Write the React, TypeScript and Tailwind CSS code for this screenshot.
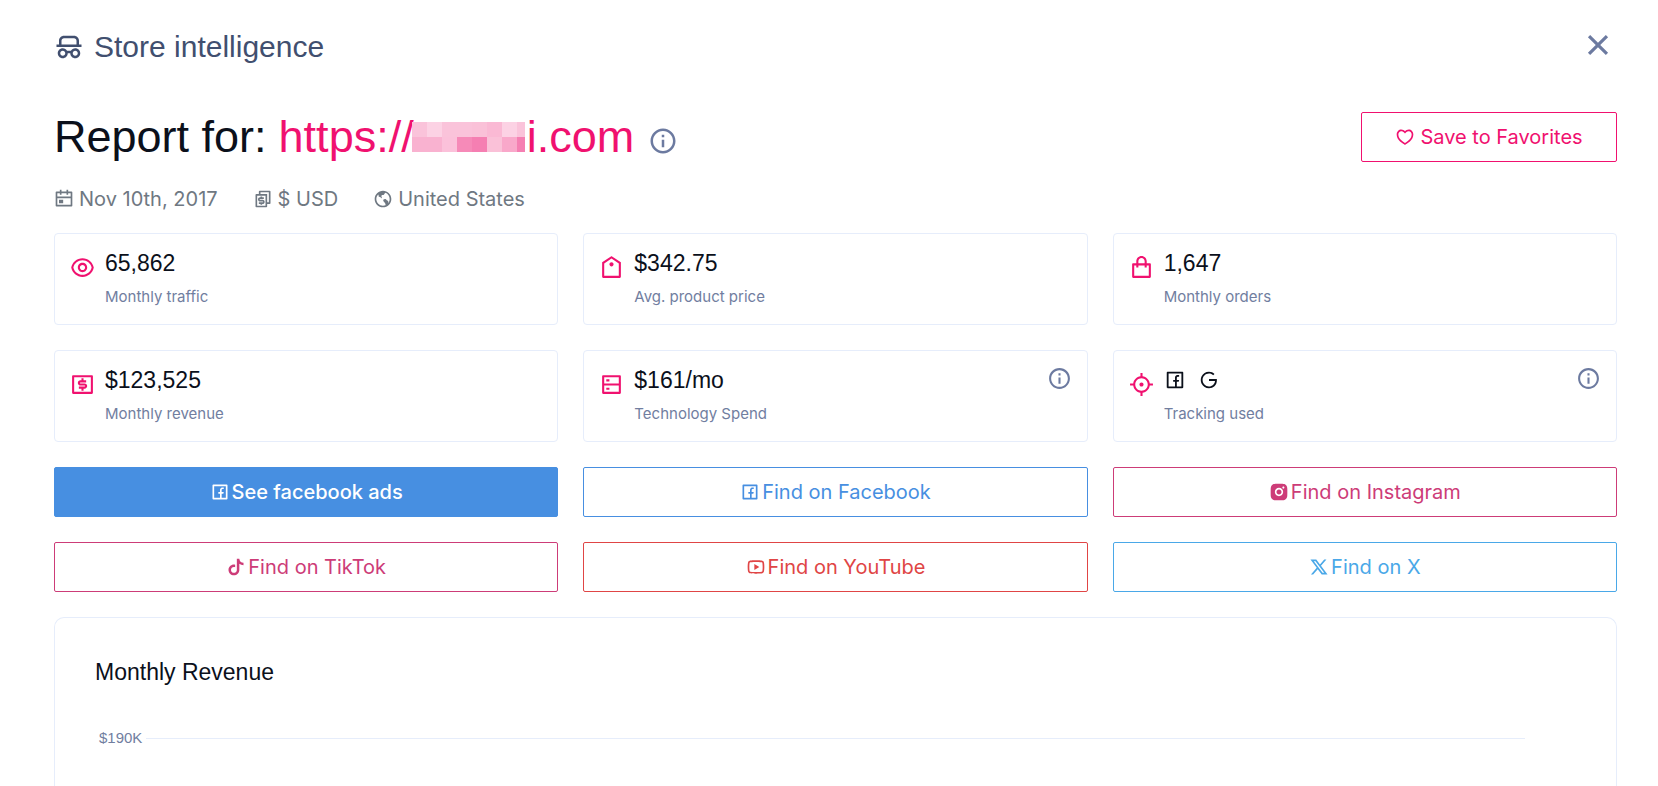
import React from 'react';
import {
  RiCalendarEventLine,
  RiCloseLine,
  RiCurrencyLine,
  RiEarthLine,
  RiEyeLine,
  RiFacebookBoxLine,
  RiFocus3Line,
  RiGoogleLine,
  RiHeart3Line,
  RiInformationLine,
  RiInstagramFill,
  RiMoneyDollarBoxLine,
  RiPriceTagLine,
  RiServerLine,
  RiShoppingBagLine,
  RiSpyLine,
  RiTiktokFill,
  RiTwitterXLine,
  RiYoutubeLine,
} from 'react-icons/ri';
import type { IconType } from 'react-icons';

interface StatCardProps {
  icon: IconType;
  value: React.ReactNode;
  label: string;
  hasInfo?: boolean;
}

const StatCard: React.FC<StatCardProps> = ({ icon: Icon, value, label, hasInfo }) => (
  <div className="flex items-start gap-2.5 h-[92px] rounded border border-[#e6edfb] px-[15px] pt-[15px]">
    <Icon className="text-[#f0116f] mt-1.5 flex-shrink-0" size={25} />
    <div className="flex-1">
      <div className="flex items-center h-7 text-[23px] leading-7 text-[#0b101b]">{value}</div>
      <div className="mt-2.5 font-['Inter',sans-serif] text-[15px] leading-5 text-[#717e9f]">{label}</div>
    </div>
    {hasInfo && (
      <button type="button" aria-label={`About ${label}`} className="text-[#6c7aa0]">
        <RiInformationLine size={25} />
      </button>
    )}
  </div>
);

const stats: StatCardProps[] = [
  { icon: RiEyeLine, value: '65,862', label: 'Monthly traffic' },
  { icon: RiPriceTagLine, value: '$342.75', label: 'Avg. product price' },
  { icon: RiShoppingBagLine, value: '1,647', label: 'Monthly orders' },
  { icon: RiMoneyDollarBoxLine, value: '$123,525', label: 'Monthly revenue' },
  { icon: RiServerLine, value: '$161/mo', label: 'Technology Spend', hasInfo: true },
  {
    icon: RiFocus3Line,
    value: (
      <span className="flex gap-3">
        <RiFacebookBoxLine size={22} />
        <RiGoogleLine size={22} />
      </span>
    ),
    label: 'Tracking used',
    hasInfo: true,
  },
];

const links = [
  { icon: RiFacebookBoxLine, text: 'See facebook ads', style: 'bg-[#478fe1] border-[#478fe1] text-white font-medium' },
  { icon: RiFacebookBoxLine, text: 'Find on Facebook', style: 'border-[#478fe1] text-[#478fe1]' },
  { icon: RiInstagramFill, text: 'Find on Instagram', style: 'border-[#cd3c78] text-[#cd3c78]' },
  { icon: RiTiktokFill, text: 'Find on TikTok', style: 'border-[#cd3c78] text-[#cd3c78]' },
  { icon: RiYoutubeLine, text: 'Find on YouTube', style: 'border-[#e04545] text-[#e04545]' },
  { icon: RiTwitterXLine, text: 'Find on X', style: 'border-[#4aa8e8] text-[#4aa8e8]' },
];

const meta = [
  { icon: RiCalendarEventLine, text: 'Nov 10th, 2017' },
  { icon: RiCurrencyLine, text: '$ USD' },
  { icon: RiEarthLine, text: 'United States' },
];

// The middle of the domain is masked with two rows of tiles
const maskTiles = [
  'bg-[#fac3da]', 'bg-[#fcd2e4]', 'bg-[#fac3da]', 'bg-[#fac3da]', 'bg-[#fac1d8]', 'bg-[#fab9d4]', 'bg-[#fcd2e4]', 'bg-[#fac3da]',
  'bg-[#f9b2d0]', 'bg-[#f9b2d0]', 'bg-[#fbc1da]', 'bg-[#f68ab8]', 'bg-[#f57fb2]', 'bg-[#fac1d8]', 'bg-[#f9a8ca]', 'bg-[#f57fb2]',
];

const App: React.FC = () => {
  return (
    <div className="min-h-screen flex flex-col bg-white pl-[54px] pr-[41px] pt-7 font-['Liberation_Sans',Arial,sans-serif]">
      <header className="flex items-start justify-between h-9">
        <div className="flex items-center gap-2.5 text-[#414f6f]">
          <RiSpyLine size={30} />
          <span className="text-[30px] leading-[38px]">Store intelligence</span>
        </div>
        <button type="button" aria-label="Close" className="text-[#6c7aa0] -mt-0.5">
          <RiCloseLine size={38} />
        </button>
      </header>

      <div className="flex items-center justify-between h-[50px] mt-12">
        <div className="flex items-center">
          <h1 className="flex items-center text-[45px] leading-[50px] text-[#0b101b]">
            <span className="mr-3">Report for:</span>
            <a href="#store" className="flex items-center text-[#f0116f]">
              https://
              <span className="grid grid-cols-[repeat(7,15px)_8px] -ml-0.5 mr-0.5">
                {maskTiles.map((tile, i) => (
                  <span key={i} className={`h-[15px] ${tile}`} />
                ))}
              </span>
              i.com
            </a>
          </h1>
          <button type="button" aria-label="About this report" className="text-[#6c7aa0] ml-3.5 mt-2">
            <RiInformationLine size={30} />
          </button>
        </div>
        <button
          type="button"
          className="flex items-center justify-center gap-[5px] w-64 h-[50px] rounded-xs border border-[#f0116f] text-[#f0116f] font-['Inter',sans-serif] text-xl"
        >
          <RiHeart3Line size={20} />
          Save to Favorites
        </button>
      </div>

      <div className="flex gap-[35px] mt-5 h-[34px] items-center font-['Inter',sans-serif] text-xl text-[#6f7882]">
        {meta.map(({ icon: Icon, text }) => (
          <span key={text} className="flex items-center gap-[5px]">
            <Icon size={20} />
            {text}
          </span>
        ))}
      </div>

      <div className="grid grid-cols-3 gap-[25px] mt-[17px]">
        {stats.map((stat) => (
          <StatCard key={stat.label} {...stat} />
        ))}
        {links.map(({ icon: Icon, text, style }) => (
          <a
            key={text}
            href="#social"
            className={`flex items-center justify-center gap-0.5 h-[50px] rounded-xs border font-['Inter',sans-serif] text-xl ${style}`}
          >
            <Icon size={20} />
            {text}
          </a>
        ))}
      </div>

      <section className="flex-1 mt-[25px] rounded-t-[10px] border border-b-0 border-[#e6edfb] pl-10 pr-[91px] pt-10">
        <h2 className="text-[23px] leading-7 text-[#0b101b]">Monthly Revenue</h2>
        <div className="flex items-center gap-1 mt-[42px] pl-1 text-[15px] leading-5 text-[#717e9f]">
          $190K
          <span className="flex-1 h-px bg-[#e6edfb]" />
        </div>
      </section>
    </div>
  );
};

export default App;
